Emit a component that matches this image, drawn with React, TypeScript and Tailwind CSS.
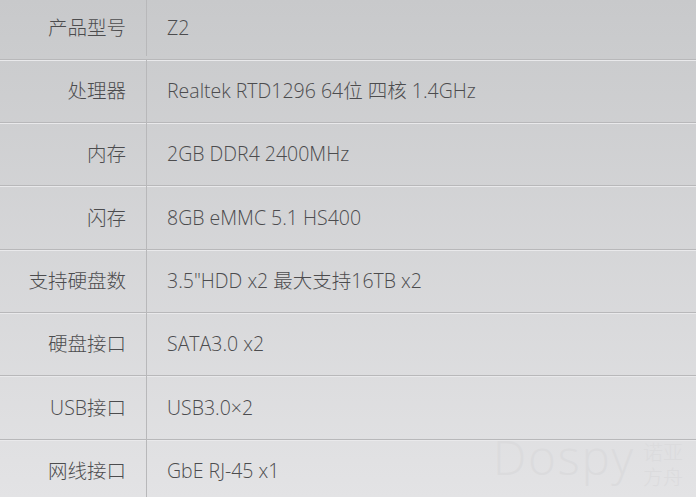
const rows: { label: string; value: string; h: string }[] = [
  { label: '产品型号', value: 'Z2', h: 'h-[60px] pb-[3px]' },
  { label: '处理器', value: 'Realtek RTD1296 64位 四核 1.4GHz', h: 'h-[63px]' },
  { label: '内存', value: '2GB DDR4 2400MHz', h: 'h-[63px]' },
  { label: '闪存', value: '8GB eMMC 5.1 HS400', h: 'h-[64px]' },
  { label: '支持硬盘数', value: '3.5"HDD x2 最大支持16TB x2', h: 'h-[63px]' },
  { label: '硬盘接口', value: 'SATA3.0 x2', h: 'h-[63px]' },
  { label: 'USB接口', value: 'USB3.0×2', h: 'h-[64px]' },
  { label: '网线接口', value: 'GbE RJ-45 x1', h: 'h-[63px]' },
];

export default function App() {
  return (
    <div
      className="relative w-[696px] h-[497px] overflow-hidden bg-gradient-to-b from-[#c8c9cb] to-[#e3e3e5] text-[#4c4c4e] font-light"
      style={{ fontFamily: '"Open Sans", "Noto Sans CJK SC", sans-serif' }}
    >
      {rows.map((r, i) => (
        <div
          key={i}
          className={`flex ${r.h} box-border border-b border-[#b8b8ba] shadow-[0_1px_0_#e9e9eb]`}
        >
          <div className="w-[147px] shrink-0 flex items-center justify-end pr-[20px] border-r border-[#b8b8ba] text-[19.5px]">
            {r.label}
          </div>
          <div className="flex items-center pl-[20px] text-[19.5px]">{r.value}</div>
        </div>
      ))}

      {/* watermark */}
      <span className="absolute left-[493px] top-[434px] text-[47px] leading-none tracking-[2px] text-[#dbdbdd] pointer-events-none">
        Dospy
      </span>
      <span className="absolute left-[643px] top-[440px] flex flex-col text-[20px] leading-[25px] text-[#dbdbdd] pointer-events-none">
        <span>诺亚</span>
        <span>方舟</span>
      </span>
    </div>
  );
}
